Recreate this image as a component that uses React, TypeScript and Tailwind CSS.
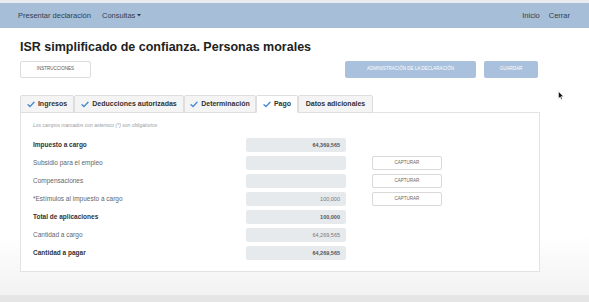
import React from "react";

const font = { fontFamily: '"Liberation Sans", Arial, sans-serif' };

const tabs = [
  { label: "Ingresos", w: "w-[54px]", check: true },
  { label: "Deducciones autorizadas", w: "w-[110px]", check: true },
  { label: "Determinación", w: "w-[72px]", check: true },
  { label: "Pago", w: "w-[42px]", check: true, active: true },
  { label: "Datos adicionales", w: "w-[75px]", check: false },
];

const rows = [
  { label: "Impuesto a cargo", value: "64,369,565", bold: true },
  { label: "Subsidio para el empleo", value: "", capture: true },
  { label: "Compensaciones", value: "", capture: true },
  { label: "*Estímulos al impuesto a cargo", value: "100,000", capture: true },
  { label: "Total de aplicaciones", value: "100,000", bold: true },
  { label: "Cantidad a cargo", value: "64,269,565" },
  { label: "Cantidad a pagar", value: "64,269,565", bold: true },
];

function Check() {
  return (
    <svg width="8" height="7" viewBox="0 0 8 7" className="shrink-0">
      <path d="M1 3.8 L3 5.6 L7 1.2" fill="none" stroke="#3f86d4" strokeWidth="1.3" strokeLinecap="round" strokeLinejoin="round" />
    </svg>
  );
}

export default function App() {
  return (
    <div style={font} className="relative w-[589px] h-[302px] overflow-hidden flex flex-col bg-white">
      <div className="h-[3px] bg-[#e9ebee]" />
      <nav className="h-[25px] bg-[#a6bed8] flex items-center justify-between px-[18px] text-[7.5px] text-[#2e3f52] shadow-[0_2px_3px_rgba(0,0,0,0.12)]">
        <div className="flex items-center gap-[11px]">
          <span>Presentar declaración</span>
          <span className="flex items-center gap-[2px]">
            Consultas
            <svg width="4" height="3" viewBox="0 0 4 3"><path d="M0 0 H4 L2 2.5 Z" fill="#2e3f52" /></svg>
          </span>
        </div>
        <div className="flex items-center gap-[9px] pr-[1px]">
          <span>Inicio</span>
          <span>Cerrar</span>
        </div>
      </nav>

      <div className="flex-1 bg-[linear-gradient(to_bottom,#ffffff_0%,#ffffff_78%,#f2f2f2_100%)] px-[20px] pt-[12px]">
        <h1 className="text-[12.5px] font-bold text-[#222] leading-[15px]">
          ISR simplificado de confianza. Personas morales
        </h1>

        <div className="mt-[6px] flex items-center w-[518px]">
          <button className="w-[71px] h-[17px] flex items-center justify-center bg-white border border-[#dcdcdc] rounded-[2px] text-[4.5px] leading-none text-[#555]">
            INSTRUCCIONES
          </button>
          <div className="ml-auto flex gap-[8px]">
            <button className="w-[131px] h-[17px] flex items-center justify-center bg-[#a9c1dc] rounded-[2px] text-[4.5px] leading-none text-white">
              ADMINISTRACIÓN DE LA DECLARACIÓN
            </button>
            <button className="w-[54px] h-[17px] flex items-center justify-center bg-[#a9c1dc] rounded-[2px] text-[4.5px] leading-none text-white">
              GUARDAR
            </button>
          </div>
        </div>

        <div className="mt-[17px] flex h-[18px] items-end relative z-10">
          {tabs.map((t) => (
            <div
              key={t.label}
              className={`${t.w} h-[18px] flex items-center justify-center gap-[3px] border border-[#dedede] rounded-t-[2px] text-[7px] font-bold text-[#333] ${
                t.active ? "bg-white border-b-white" : "bg-[#f4f4f4] border-b-[#dedede]"
              }`}
            >
              {t.check && <Check />}
              <span>{t.label}</span>
            </div>
          ))}
        </div>

        <div className="-mt-px w-[520px] h-[160px] border border-[#e3e3e3] bg-white px-[12px] pt-[8px]">
          <p className="text-[5px] italic text-[#9a9a9a] leading-[8px]">
            Los campos marcados con asterisco (*) son obligatorios
          </p>
          <div className="mt-[9px] flex flex-col gap-[4px]">
            {rows.map((r) => (
              <div key={r.label} className="flex items-center h-[14px]">
                <span className={`w-[213px] text-[6.5px] ${r.bold ? "font-bold text-[#333]" : "text-[#666]"}`}>
                  {r.label}
                </span>
                <div
                  className={`w-[100px] h-[14px] rounded-[2px] bg-[#e7eaed] flex items-center justify-end pr-[6px] text-[5.5px] ${
                    r.bold ? "font-bold text-[#555]" : "text-[#777]"
                  }`}
                >
                  {r.value}
                </div>
                {r.capture && (
                  <button className="ml-[26px] w-[70px] h-[14px] flex items-center justify-center bg-white border border-[#d9d9d9] rounded-[2px] text-[4.5px] leading-none text-[#666]">
                    CAPTURAR
                  </button>
                )}
              </div>
            ))}
          </div>
        </div>
      </div>

      <div className="h-[7px] bg-[#e5e5e5]" />

      <svg className="absolute left-[558px] top-[91px]" width="6" height="9" viewBox="0 0 6 9">
        <path d="M0.5 0.5 V7.5 L2.2 6 L3.3 8.5 L4.3 8 L3.2 5.6 L5.5 5.6 Z" fill="#111" stroke="#fff" strokeWidth="0.5" />
      </svg>
    </div>
  );
}
